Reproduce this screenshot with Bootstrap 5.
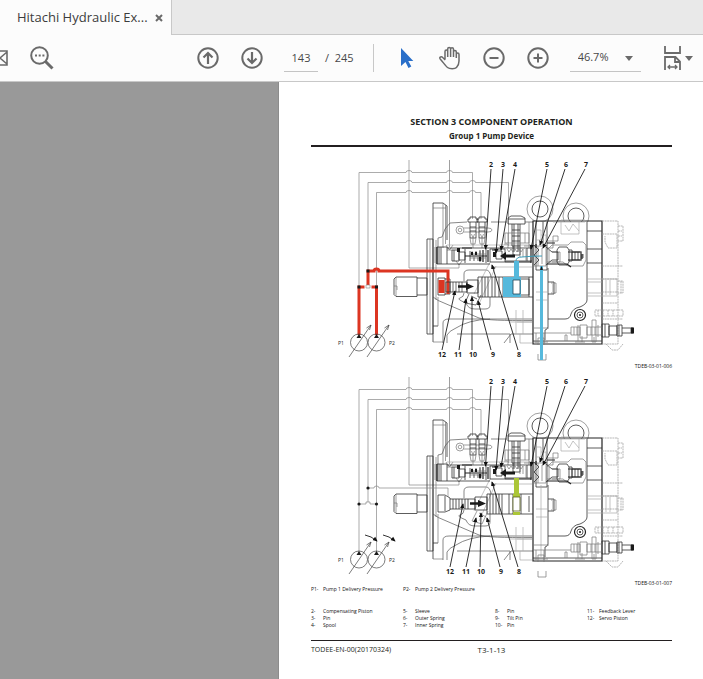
<!DOCTYPE html>
<html lang="en">
<head>
<meta charset="utf-8">
<meta name="viewport" content="width=device-width, initial-scale=1">
<title>Hitachi Hydraulic Excavator</title>
<link href="https://cdn.jsdelivr.net/npm/bootstrap@5.3.0/dist/css/bootstrap.min.css" rel="stylesheet">
<style>
  body { font-family: "Open Sans", "Noto Sans", sans-serif; background: #fff; color: #231f20; }
  .tab-strip { background: #e9e9e9; height: 35px; border-bottom: 1px solid #c8c8c8; }
  .doc-tab { background: #fcfcfc; width: 172px; height: 35px; padding-left: 17px; border-right: 1px solid #c8c8c8; font-size: 13px; color: #3c3c3c; }
  .close-tab { margin-left: 7px; }
  .toolbar-row { background: #fcfcfc; height: 47px; border-bottom: 1px solid #c8c8c8; color: #484848; font-size: 11px; }
  .tool { border: 0; background: none; padding: 0; line-height: 0; flex: none; color: #6a6a6a; }
  .tool svg { display: block; fill: none; stroke: currentColor; stroke-width: 2; }
  .tool-group { gap: 20px; }
  .after-mail { margin-left: 21px; }
  .after-search { margin-left: 141px; }
  .after-group { margin-left: 20px; }
  .after-zoom { margin-left: 31px; }
  .page-total { margin-left: 7px; margin-right: 19px; }
  .page-box { width: 34px; height: 28px; border: 0; border-bottom: 1px solid #c4c4c4; background: none; padding: 0; text-align: center; color: inherit; }
  .zoom-box { width: 71px; height: 28px; border: 0; border-bottom: 1px solid #c4c4c4; background: none; padding: 0 0 0 8px; appearance: none; color: inherit; border-radius: 0; }
  .zoom-caret { margin-left: -16px; pointer-events: none; }
  .split { width: 1px; height: 28px; background: #c8c8c8; }
  .backdrop { width: 279px; background: #999; border-right: 1px solid #8c8c8c; }
  .sheet { padding: 33px 31px 16px 32px; min-width: 0; background: #fff; }
  .sheet h1 { font: bold 9px/14px "Open Sans", sans-serif; margin: 0; }
  .sheet h2 { font: bold 8px/14px "Open Sans", sans-serif; margin: 0; }
  .sheet header { border-bottom: 2px solid #231f20; padding-bottom: 2px; margin-bottom: 6px; }
  .plate svg { display: block; width: 100%; height: auto; }
  .plate figcaption { font-size: 5px; line-height: 7px; text-align: right; color: #111; }
  .legend-grid { display: grid; grid-template-columns: repeat(3, 92px) 1fr; font-size: 5px; line-height: 7px; margin: 0; color: #111; }
  .legend-grid dl { display: grid; grid-template-columns: 12px 1fr; margin: 0; align-content: start; }
  .legend-grid dt { font-weight: 400; }
  .legend-grid dd { margin: 0; white-space: nowrap; }
  .keys { margin-top: -1px; margin-bottom: 15px; }
  .sheet footer { border-top: 1px solid #231f20; margin-top: 11px; padding-top: 4px; font-size: 7px; line-height: 10px; }
  .sheet footer .folio { font-size: 8px; }
  .ln { fill: none; stroke: #777; stroke-width: .7; }
  .lt { fill: none; stroke: #aaa; stroke-width: .7; }
  .dk { fill: none; stroke: #333; stroke-width: .8; }
  .hv { fill: none; stroke: #222; stroke-width: 1.2; }
  .bk { fill: #1a1a1a; stroke: none; }
  .ptr { fill: none; stroke: #1c1c1c; stroke-width: .9; }
  .hot { fill: none; stroke: #dc3522; stroke-width: 3; }
  .cold { fill: #56b9dc; stroke: none; }
  .num { font: bold 7px "Open Sans", sans-serif; fill: #1a1a1a; text-anchor: middle; }
  .lab { font: 5px "Open Sans", sans-serif; fill: #1a1a1a; }
</style>
<script src="https://cdn.jsdelivr.net/npm/bootstrap@5.3.0/dist/js/bootstrap.bundle.min.js"></script>
</head>
<body class="d-flex flex-column min-vh-100">
<nav class="tab-strip" aria-label="Documents">
  <div class="doc-tab d-flex align-items-center">
    <span class="text-nowrap">Hitachi Hydraulic Ex...</span>
    <button class="tool close-tab" type="button" aria-label="Close tab"><svg width="8" height="8" viewBox="0 0 8 8"><path d="M1 1l6 6M7 1l-6 6"/></svg></button>
  </div>
</nav>
<div class="toolbar-row d-flex align-items-center overflow-hidden" role="toolbar" aria-label="Document tools">
  <button class="tool" type="button" aria-label="Send by email"><svg width="8" height="24" viewBox="0 0 8 24"><path d="M-8 5H7v14H-8M7 6L0 12l7 6" stroke-width="1.6"/></svg></button>
  <button class="tool after-mail" type="button" aria-label="Search"><svg width="26" height="26" viewBox="0 0 26 26"><circle cx="10.500" cy="10.500" r="8.300"/><path d="M16.500 16.500l7 7" stroke-width="3"/><path d="M6 10.500h2M9.700 10.500h2M13.400 10.500h2"/></svg></button>
  <div class="tool-group after-search d-flex">
    <button class="tool" type="button" aria-label="Previous page"><svg width="24" height="24" viewBox="0 0 24 24"><circle cx="12" cy="12" r="9.700"/><path d="M12 18V7M7.500 11.500L12 7l4.500 4.500" stroke-width="2.200"/></svg></button>
    <button class="tool" type="button" aria-label="Next page"><svg width="24" height="24" viewBox="0 0 24 24"><circle cx="12" cy="12" r="9.700"/><path d="M12 6v11M7.500 12.500L12 17l4.500-4.500" stroke-width="2.200"/></svg></button>
  </div>
  <input class="page-box after-group" type="text" value="143" aria-label="Page number">
  <span class="page-total text-nowrap">/&nbsp; 245</span>
  <span class="split"></span>
  <div class="tool-group after-group d-flex">
    <button class="tool" type="button" aria-label="Select"><svg width="24" height="24" viewBox="0 0 24 24"><path d="M7 2v18l4.500-4 3 6 2.800-1.400-3-5.600h5z" fill="#2a6fc9" stroke="none"/></svg></button>
    <button class="tool" type="button" aria-label="Pan"><svg width="24" height="24" viewBox="0 0 24 24"><path d="M7 13V5.500c0-2 2.700-2 2.700 0V11M9.700 10V3c0-2 2.900-2 2.900 0v8M12.600 5V3.300c0-2 2.900-2 2.900 0V11M15.500 6c0-2 2.800-2 2.800 0v6M18.300 8.500c0-2 2.700-2 2.700 0V15c0 3-1 5-2.500 6.500-1.500 1.600-7 1.600-9 0C7.500 20 5 16 2.200 13c-1.300-1.600.7-3 2.200-1.800L7.300 14" stroke-width="1.500"/></svg></button>
    <button class="tool" type="button" aria-label="Zoom out"><svg width="24" height="24" viewBox="0 0 24 24"><circle cx="12" cy="12" r="9.700"/><path d="M7.500 12h9"/></svg></button>
    <button class="tool" type="button" aria-label="Zoom in"><svg width="24" height="24" viewBox="0 0 24 24"><circle cx="12" cy="12" r="9.700"/><path d="M7.500 12h9M12 7.500v9"/></svg></button>
  </div>
  <select class="zoom-box after-group" aria-label="Zoom level"><option>46.7%</option><option>100%</option></select>
  <svg class="zoom-caret flex-shrink-0" width="8" height="5" viewBox="0 0 8 5"><path d="M0 0h8L4 5z" fill="#6a6a6a"/></svg>
  <button class="tool after-zoom d-flex align-items-center gap-1" type="button" aria-label="Fit width"><svg width="17" height="26" viewBox="0 0 17 26"><path d="M1 1v7h15V1M1 25V12h10.500l4.500 4.500V25M11 12v5h5" stroke-width="1.800"/><path d="M4 22h9M6 20l-2 2 2 2M11 20l2 2-2 2" stroke-width="1.300"/></svg><svg width="8" height="5" viewBox="0 0 8 5"><path d="M0 0h8L4 5z" fill="#6a6a6a" stroke="none"/></svg></button>
</div>
<main class="d-flex flex-grow-1">
  <div class="backdrop flex-shrink-0"></div>
  <article class="sheet flex-grow-1">
    <header class="text-center"><h1>SECTION 3 COMPONENT OPERATION</h1><h2>Group 1 Pump Device</h2></header>
    <figure class="plate m-0">
      <svg viewBox="311 153 361 210" role="img" aria-label="Pump device with delivery pressure applied">
        <defs>
          <marker id="tip" viewBox="0 0 6 6" refX="5" refY="3" markerWidth="5" markerHeight="5" markerUnits="userSpaceOnUse" orient="auto"><path d="M0 .4L6 3L0 5.600z" fill="#111"/></marker>
          <g id="ring"><circle class="ln" r="13"/><circle class="dk" r="8"/></g>
          <g id="plug"><path class="dk" d="M-5 3v-3h2v-2h6v2h2v3zM-3 3v16h6V3M-3 8h6M-3 12h6"/><path class="ln" d="M-3 19l1 6h4l1-6M-1.500 15l1.500 4 1.500-4M0 19v10"/></g>
          <g id="housing">
            <!-- Pilot lines -->
            <path class="lt" d="M409 160v108h50v-4M359 287V172.500h47a3 2 0 0 1 6 0h34.500a3 2 0 0 1 6 0h20V219M368 271v-88.500h38a3 2 0 0 1 6 0h34.500a3 2 0 0 1 6 0h17a3 2 0 0 1 6 0h33V246M376.500 287v-94.500h29.500a3 2 0 0 1 6 0h34.500a3 2 0 0 1 6 0h17a3 2 0 0 1 6 0h5.500V219" style="stroke:#888"/>
            <path class="ln" d="M449.500 160v87M446 245l3.500 5 3.500-5M447 250h5M456 261l3 4 3-4"/>
            <!-- Input shaft and mounting flange -->
            <path class="dk" d="M396 277h21v19.500h-21l-2-2v-15.500zM417 278h10v17h-10M427 239h6v95h-6zM433 342V203h10l4 3v34M433 326h5"/>
            <path class="ln" d="M396 277v19M394 286h3v4M438 297v29M443 203v45M445.500 205v39M433 208h13M435 247v16M433 342h10M430 239v95M436 240v60"/>
            <!-- Main case -->
            <path class="ln" d="M438 247v-9l4-1 3-8 5-6 17-1M491 222h16M525 222h8M433 297q5 4 11 6l35 15q10 3 53 2.500M443 343v-20q0-4 6-4h83M447 343v-8q2-4 9-7 12-8 34-9M457 334h53v9M504 343l7-9h22M464 281v-7q0-4 5-4h17q4 0 5 7M464 293q0 4-4 5t6 5q2 6 9 6h10q5 0 5-4v-8" style="stroke:#555"/>
            <path class="lt" d="M447 245h85M490 262l-16 32M496 266l-17 38M491 267h41M510 322h22M516 310v24M523 310v24M517 322h15M520 334v9h12"/>
            <circle class="ln" cx="460" cy="230" r="4"/><circle class="ln" cx="460" cy="230" r="1.800"/>
            <path class="ln" d="M464 228h24q4 0 4 2t-4 2h-24"/>
            <use href="#plug" x="473" y="219"/><use href="#plug" x="482" y="219"/>
            <path class="dk" d="M508 224v-6l3-2h10l4 2v6zM508 219h17M512 224v22h8V224M514 224v28M518 224v28M512 230h8M512 236h8M512 241h8M513 246v9h7v-9"/>
            <path class="ln" d="M505 233h24v10h-24zM508 233v10M525 233v10M504 244h4v4M524 246h8M529 222v26"/>
            <!-- Spool valve bore -->
            <path class="dk" d="M437 247h10v17h-10zM439 247v17M441 247v17M447 248h85M447 264h43M452 250h7v11h-7zM454 250v11M459 252h6v8h-6zM465 249v14M470 251v10M480 250v12M486 248v15M490 249h15v13h-15zM496 251h6v8h-6zM505 261h27M527 248v13"/>
            <path class="hv" d="M437 247v17M462 248h10M465 256h22M483 250v12M488 250v12M492 250h5M505 262h26M531 245v18"/>
            <path class="ln" d="M470 254h16M470 258h16M472 251l2 10 2-10 2 10 2-10 2 10M507 249l2 3 2-3 2 3 2-3 2 3 2-3 2 3 2-3M520 249v8M523 249v8M526 249v12"/>
            <path class="bk" d="M500 256l6-4v2.500h9v3h-9v2.500zM471 252h2v3h-2zM475 252h2v3h-2zM479 257h2v4h-2zM457 248h3v4h-3zM493 252h3v5h-3z"/>
            <!-- Control housing -->
            <path class="hv" d="M533 221h69v123h-69z"/>
            <path class="dk" d="M536 222v48h11v-48M543 222v24M587 222v78q0 4-7 7-7 1-9 7-1 5-6 5h-17M548 268v14h6v12h-6v33q-1 3-3 3v10M548 282v12M587 231h15M587 249h15M587 263h15M533 341h69"/>
            <path class="lt" d="M553 222h32v-2h-24M561 222v12h18v-12M565 225l4 6 4-7 6 7M536 230h5v10h-5M541 235h5v9h-5M541 268v72M536 292h12M536 300h12M587 279h30v17h-30M587 282h15M587 293h15M606 280v15M610 280v15"/>
            <path class="ln" d="M547 248h6v-12h5v5h-11M547 262h16l5 4h15l3-6v-15l-3-3h-12l-3 3h-16l-5 5M534 246h12v20h-12zM538 246v20M542 248v16M549 250v12M552 252h8v10h-8M551 283h5v10h-5M553 284v8"/>
            <path class="dk" d="M534 245l5 5-5 5 5 5-5 5M546 247l6 5h6v8h-6l-6 5M559 247h8l2 3v12l-2 3h-8l-2-3v-12zM569 250h3v11h-3M572 252h9v8h-9zM575 252v8M578 252v8M581 251v10M583 254v4"/>
            <path class="hv" d="M568 252h12M568 260h12M547 264h20l4 3M547 243h8M536 244v4M582 254v5"/>
            <circle class="hv" cx="580" cy="315" r="5.500"/><circle class="dk" cx="580" cy="315" r="3"/><circle class="bk" cx="580" cy="315" r="1"/>
            <!-- End cover and adjusting screws -->
            <path class="lt" d="M602 221h16v123h-16M618 226h5v15h-5M602 234h15v14h-9l-3-6v-6M618 231h4M618 236h4M602 266h21M602 279h16M618 281h5v12h-5M621 281v12M602 292h16M595 310h28v6h-28zM598 310v6M603 310v6M608 310v6M613 310v6M602 319h21M602 303h16M606 344l6 6h6l5-6" stroke-dasharray="2 .6" style="stroke:#999"/>
            <path class="dk" d="M602 324h7v13h-7zM605 324v13M609 326h8v9h-8zM617 325h5v11h-5zM619 325v11M622 328h11v5h-11M631 328v5"/>
            <path class="bk" d="M631 327.500h3v6h-3z"/>
            <path class="ln" d="M533 333h38M571 327h9v8h-9zM574 327v8M577 327v8M580 325h7v13h-7zM587 327h15v8h-15zM591 327v8M595 327v8M598 325v12M592 320h4v22h-4zM578 325v16M582 336v6M575 342h10M567 341v-6h-2v6M536 333v10M544 333v10M534 342h14M538 345v-7h6v7M533 328h16M594 337v5M538 360v-6M538 360h8v-6"/>
          </g>
          <g id="pumps">
            <g class="ln" style="stroke:#444"><circle cx="359" cy="342.500" r="8.500"/><circle cx="376.500" cy="342.500" r="8.500"/><path d="M349 357l22-32M371 325l-1.500 5M371 325l-4.500 3M367 357l22-32M389 325l-1.500 5M389 325l-4.500 3"/></g>
            <path class="bk" d="M356.500 338l2.500-4 2.500 4zM374 338l2.500-4 2.500 4z"/>
            <text class="lab" x="338" y="345">P1</text><text class="lab" x="389" y="345">P2</text>
          </g>
          <g id="upper-callouts">
            <path class="ptr" marker-end="url(#tip)" d="M491 169l-5.500 80"/><path class="ptr" marker-end="url(#tip)" d="M503 169l-7 84"/><path class="ptr" marker-end="url(#tip)" d="M515 169l-14 81"/><path class="ptr" marker-end="url(#tip)" d="M547 169l-16 80"/><path class="ptr" marker-end="url(#tip)" d="M565 169l-25 76"/><path class="ptr" marker-end="url(#tip)" d="M585 169l-42 79"/><path class="ptr" marker-end="url(#tip)" d="M518 350l-26-85"/>
            <text class="num" x="491" y="167">2</text><text class="num" x="503" y="167">3</text><text class="num" x="515" y="167">4</text><text class="num" x="547" y="167">5</text><text class="num" x="566" y="167">6</text><text class="num" x="586" y="167">7</text><text class="num" x="519" y="357">8</text>
          </g>
        </defs>
        <use href="#ring" x="540" y="209"/><use href="#ring" x="576" y="216"/>
        <path d="M528 222h73v12h-73z" fill="#fff"/>
        <use href="#housing"/>
        <!-- Servo piston, pressurised -->
        <path class="dk" d="M438 278h7v17h-7zM445 279h5v15h-5M450 282h17v10h-17M467 280h11v13h-11zM478 277h25v20h-25zM503 277h30M503 297h30M521 279h8v16h-8M529 277v20"/>
        <path class="ln" d="M453 282v10M456 282v10M459 282v10M462 282v10M469 294l-4 9 11 2 5-10M471 296l6 3" style="stroke:#333"/>
        <path class="dk" d="M482 277v20M485 277v20M488 277v20M492 277v20M495 277v20M499 277v20"/>
        <path d="M438.500 280h6v13h-6z" fill="#dc3522"/>
        <path class="cold" d="M503 277h18v20h-18zM514 261h5v17h-5zM540 266h3v94h-3z"/>
        <path d="M513 280h7v14h-7z" fill="#fff" stroke="#245" stroke-width=".8"/>
        <path d="M516 261q0-4 6-4 10-1 20-1" fill="none" stroke="#3a9cb8" stroke-width="1"/>
        <path class="bk" d="M458 285.300h8v-2.300l8 3.500-8 3.500v-2.300h-8zM540 270l1.500-4 1.500 4z"/>
        <path class="hot" d="M448 294v-23h-69a2.500 2 0 0 0-5 0h-6v16M359 335v-48h5.500M371.500 287h5v48"/>
        <path d="M366 288v-3h4v3z" fill="#fff" stroke="#888" stroke-width=".6"/>
        <path class="bk" d="M357.500 285.500h3v3h-3zM375 285.500h3v3h-3zM366.500 269.500h3v3h-3z"/>
        <path class="dk" d="M446 282h4v10h-4z"/>
        <use href="#pumps"/><use href="#upper-callouts"/>
        <path class="ptr" marker-end="url(#tip)" d="M442 350l13-59"/><path class="ptr" marker-end="url(#tip)" d="M459 350l7-51"/><path class="ptr" marker-end="url(#tip)" d="M472 350v-53"/><path class="ptr" marker-end="url(#tip)" d="M491 350l-13-49"/>
        <text class="num" x="442" y="357">12</text><text class="num" x="458" y="357">11</text><text class="num" x="473" y="357">10</text><text class="num" x="493" y="357">9</text>
      </svg>
      <figcaption>TDEB-03-01-006</figcaption>
    </figure>
    <figure class="plate m-0">
      <svg viewBox="311 153 361 210" role="img" aria-label="Pump device at reduced delivery pressure">
        <use href="#ring" x="540" y="209"/><use href="#ring" x="576" y="216"/>
        <path d="M528 222h73v12h-73z" fill="#fff"/>
        <use href="#housing"/>
        <!-- Servo piston, returned -->
        <path class="dk" d="M438 278h7l5 3v12l-5 2h-7zM445 279v15M450 282h25v10h-25M475 280h12v13h-12zM487 277h26v20h-26zM513 277h20M513 297h20M529 279v16M521 277v20"/>
        <path class="dk" d="M453 282v10M456 282v10M459 282v10M462 282v10M465 282v10M468 282v10M490 277v20M493 277v20M496 277v20M499 277v20M502 277v20M509 277v20"/>
        <path class="ln" d="M477 294l-5 10 10 3 6-13M479 296l7 4"/>
        <path d="M514 261h5v17h-5zM513 295h7v3h-7zM513 277h7v3h-7z" fill="#abc637"/>
        <path d="M513 280h7v14h-7z" fill="#fff" stroke="#566017" stroke-width=".8"/>
        <path class="bk" d="M470 285.300h8v-2.300l8 3.500-8 3.500v-2.300h-8z"/>
        <path class="ln" d="M368 271h6a2.500 2 0 0 1 5 0h69v9M359 287h7v-2h4v2h6.500M359 287v48M376.500 287v48M368 271v14" style="stroke:#888"/>
        <g class="bk"><circle cx="359" cy="287" r="1.600"/><circle cx="376.500" cy="287" r="1.600"/><circle cx="368" cy="271" r="1.600"/></g>
        <path class="ptr" marker-end="url(#tip)" d="M365 318q6 1 12 6"/><path class="ptr" marker-end="url(#tip)" d="M383 318q6 1 12 6"/>
        <use href="#pumps"/><use href="#upper-callouts"/>
        <path class="ptr" marker-end="url(#tip)" d="M450 350l13-63"/><path class="ptr" marker-end="url(#tip)" d="M466 350l10-49"/><path class="ptr" marker-end="url(#tip)" d="M480 350l1-54"/><path class="ptr" marker-end="url(#tip)" d="M500 350l-13-49"/>
        <text class="num" x="450" y="357">12</text><text class="num" x="466" y="357">11</text><text class="num" x="481" y="357">10</text><text class="num" x="501" y="357">9</text>
      </svg>
      <figcaption>TDEB-03-01-007</figcaption>
    </figure>
    <div class="legend-grid keys">
      <dl><dt>P1-</dt><dd>Pump 1 Delivery Pressure</dd></dl>
      <dl><dt>P2-</dt><dd>Pump 2 Delivery Pressure</dd></dl>
    </div>
    <div class="legend-grid">
      <dl><dt>2-</dt><dd>Compensating Piston</dd><dt>3-</dt><dd>Pin</dd><dt>4-</dt><dd>Spool</dd></dl>
      <dl><dt>5-</dt><dd>Sleeve</dd><dt>6-</dt><dd>Outer Spring</dd><dt>7-</dt><dd>Inner Spring</dd></dl>
      <dl><dt>8-</dt><dd>Pin</dd><dt>9-</dt><dd>Tilt Pin</dd><dt>10-</dt><dd>Pin</dd></dl>
      <dl><dt>11-</dt><dd>Feedback Lever</dd><dt>12-</dt><dd>Servo Piston</dd></dl>
    </div>
    <footer class="row g-0"><span class="col">TODEE-EN-00(20170324)</span><span class="folio col text-center">T3-1-13</span><span class="col"></span></footer>
  </article>
</main>
</body>
</html>
